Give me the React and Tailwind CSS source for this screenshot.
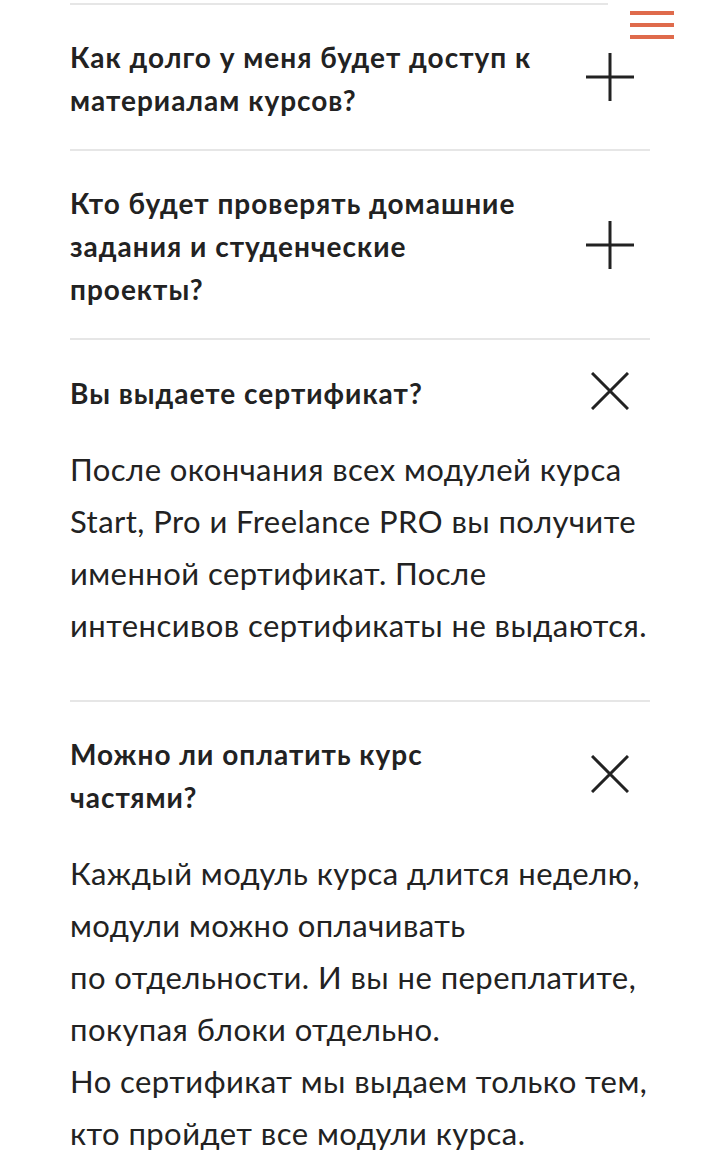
import React, { useState } from "react";

const faqs = [
  {
    q: ["Как долго у меня будет доступ к", "материалам курсов?"],
    a: null,
  },
  {
    q: ["Кто будет проверять домашние", "задания и студенческие", "проекты?"],
    a: null,
  },
  {
    q: ["Вы выдаете сертификат?"],
    a: [
      "После окончания всех модулей курса",
      "Start, Pro и Freelance PRO вы получите",
      "именной сертификат. После",
      "интенсивов сертификаты не выдаются.",
    ],
  },
  {
    q: ["Можно ли оплатить курс", "частями?"],
    a: [
      "Каждый модуль курса длится неделю,",
      "модули можно оплачивать",
      "по отдельности. И вы не переплатите,",
      "покупая блоки отдельно.",
      "Но сертификат мы выдаем только тем,",
      "кто пройдет все модули курса.",
    ],
  },
];

function PlusIcon() {
  return (
    <svg width="48" height="48" viewBox="0 0 48 48" fill="none">
      <path d="M24 0v48M0 24h48" stroke="#222" strokeWidth="3" />
    </svg>
  );
}

function CloseIcon() {
  return (
    <svg width="38" height="38" viewBox="0 0 38 38" fill="none">
      <path d="M1 1l36 36M37 1L1 37" stroke="#222" strokeWidth="3" />
    </svg>
  );
}

function FaqItem({ item, open, onToggle }) {
  return (
    <div className="border-t-2 border-[#e6e6e6]">
      <button
        onClick={onToggle}
        className="w-full flex items-center justify-between pt-[31px] pb-[27px] text-left"
      >
        <h3 className="text-[28px] leading-[43px] font-bold text-[#222] tracking-[1px]">
          {item.q.map((line, i) => (
            <span key={i} className="block whitespace-nowrap">
              {line}
            </span>
          ))}
        </h3>
        <span className="w-[48px] h-[48px] mr-[16px] -mt-[4px] flex items-center justify-center shrink-0">
          {open ? <CloseIcon /> : <PlusIcon />}
        </span>
      </button>
      {open && item.a && (
        <div className="mt-[1px] pb-[49px] text-[31px] leading-[52px] tracking-[0.45px] text-[#222]">
          {item.a.map((line, i) => (
            <p key={i} className="whitespace-nowrap">
              {line}
            </p>
          ))}
        </div>
      )}
    </div>
  );
}

export default function App() {
  const [opened, setOpened] = useState([2, 3]);

  const toggle = (i) =>
    setOpened((prev) =>
      prev.includes(i) ? prev.filter((x) => x !== i) : [...prev, i]
    );

  return (
    <div
      className="relative w-[720px] min-h-[1170px] bg-white overflow-hidden"
      style={{ fontFamily: "Lato, 'Noto Sans', sans-serif" }}
    >
      {/* menu button */}
      <button className="absolute top-0 left-[608px] w-[88px] h-[50px] bg-white flex flex-col items-center justify-center gap-[8px] z-10">
        <span className="block w-[44px] h-[4px] bg-[#df6b4c]" />
        <span className="block w-[44px] h-[4px] bg-[#df6b4c]" />
        <span className="block w-[44px] h-[4px] bg-[#df6b4c]" />
      </button>

      <div className="pt-[3px] px-[70px]">
        {faqs.map((item, i) => (
          <FaqItem
            key={i}
            item={item}
            open={opened.includes(i)}
            onToggle={() => toggle(i)}
          />
        ))}
      </div>
    </div>
  );
}
